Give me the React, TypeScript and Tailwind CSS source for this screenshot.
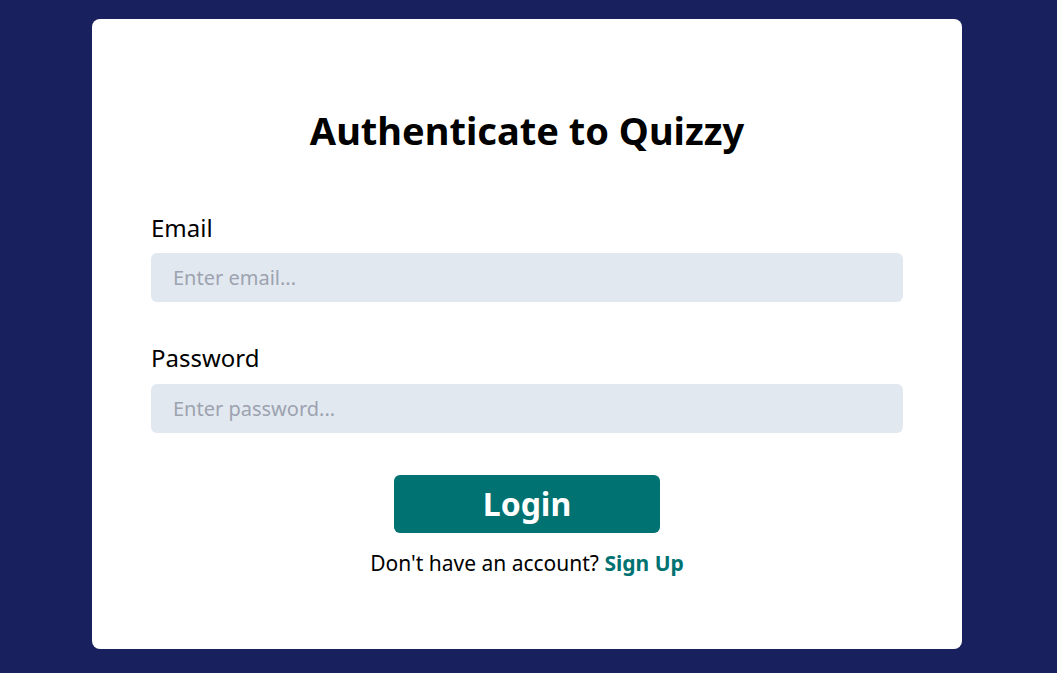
export default function App() {
  return (
    <div
      className="min-h-screen w-full bg-[#19205e] pt-[19px] pr-[3px] pb-6"
      style={{ fontFamily: '"Noto Sans", "Open Sans", sans-serif' }}
    >
      <div className="mx-auto w-[870px] rounded-lg bg-white px-[59px] pt-[91px] pb-[72px]">
        <h1 className="text-center text-[38px] leading-10 font-bold text-black">
          Authenticate to Quizzy
        </h1>

        <form className="mt-[62px]" onSubmit={(e) => e.preventDefault()}>
          <label className="block text-2xl leading-8 text-black">Email</label>
          <input
            type="email"
            placeholder="Enter email..."
            className="mt-[9px] h-[49px] w-full rounded-md bg-[#e2e8f0] px-[22px] text-xl text-black outline-none placeholder:text-[#9ca3af]"
          />

          <label className="mt-10 block text-2xl leading-8 text-black">Password</label>
          <input
            type="password"
            placeholder="Enter password..."
            className="mt-[10px] h-[49px] w-full rounded-md bg-[#e2e8f0] px-[22px] text-xl text-black outline-none placeholder:text-[#9ca3af]"
          />

          <div className="mt-[42px] flex justify-center">
            <button
              type="submit"
              className="h-[58px] w-[266px] rounded-md bg-[#007272] text-[32px] font-bold text-white"
            >
              Login
            </button>
          </div>

          <p className="mt-4 text-center text-[21px] leading-7 text-black">
            Don't have an account?{" "}
            <a href="#" className="font-bold text-[#007272]">
              Sign Up
            </a>
          </p>
        </form>
      </div>
    </div>
  );
}
